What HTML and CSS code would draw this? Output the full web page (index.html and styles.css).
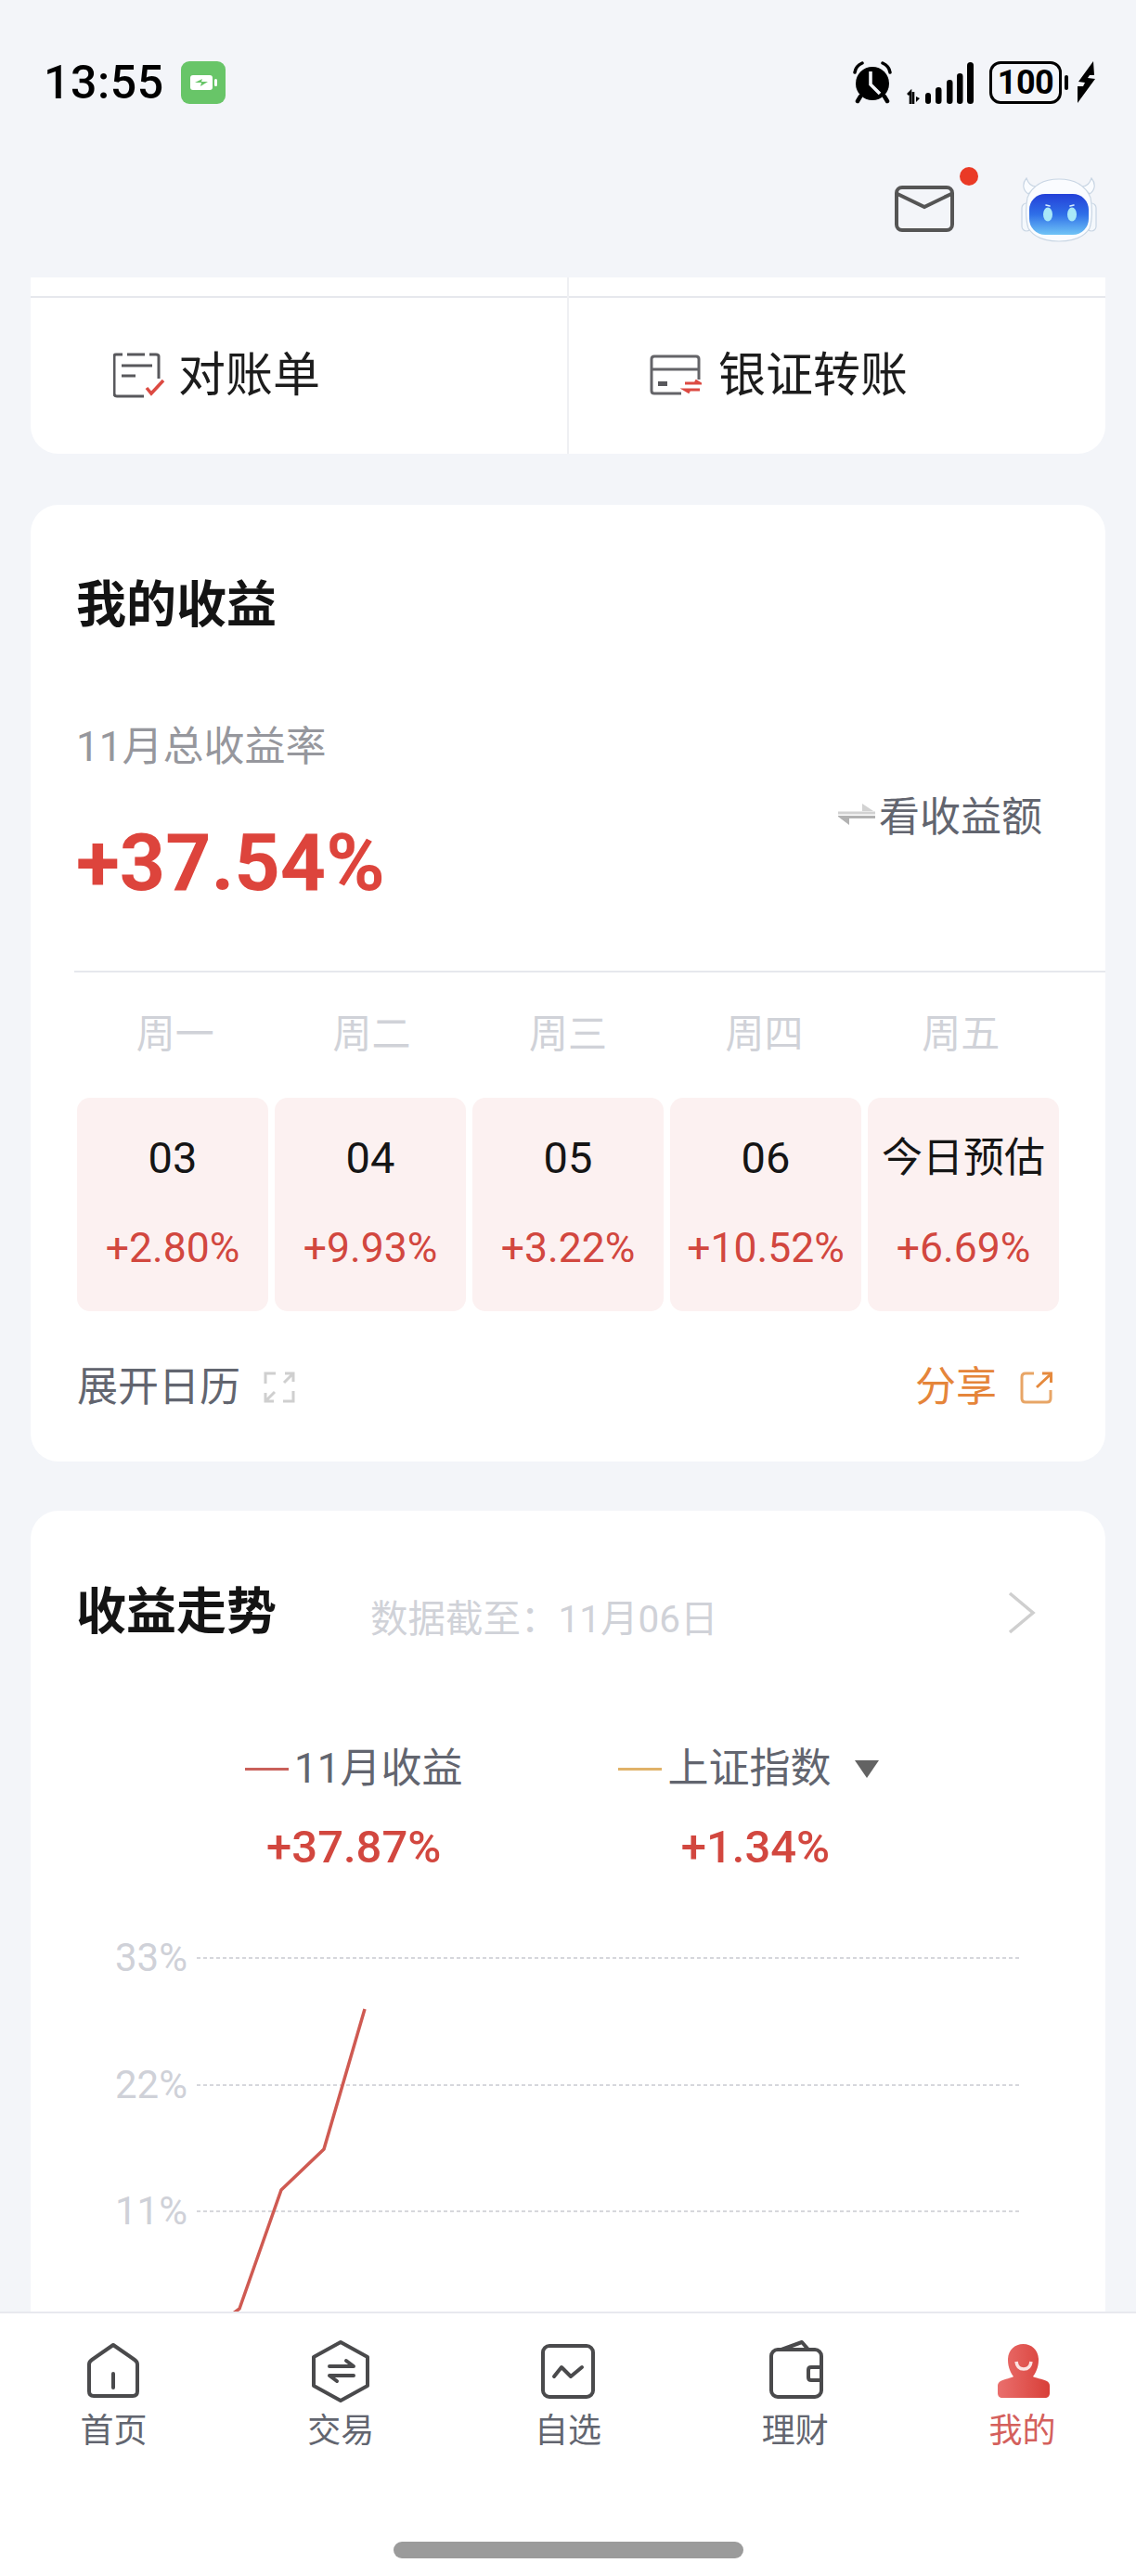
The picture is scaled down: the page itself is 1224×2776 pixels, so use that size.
FILE: index.html
```html
<!DOCTYPE html>
<html lang="zh-CN">
<head>
<meta charset="utf-8">
<title>我的收益</title>
<link rel="stylesheet" href="styles.css">
</head>
<body>
<div class="screen">
  <header class="status">
    <div class="status-left">
      <span class="clock">13:55</span>
      <svg class="charge-badge" width="48" height="46" viewBox="0 0 48 46"><rect width="48" height="46" rx="9" fill="#68c568"/><rect x="10" y="15" width="24" height="16" rx="3" fill="#fff"/><rect x="36" y="19" width="3" height="8" rx="1.5" fill="#fff"/><path d="M15 23l8-4-1 3 7 0-8 5 1-4z" fill="#68c568"/></svg>
    </div>
    <div class="status-right">
      <svg class="st-alarm" width="44" height="46" viewBox="0 0 44 46"><path d="M3 12Q4 5 11 2M41 12Q40 5 33 2" fill="none" stroke="#000" stroke-width="3.5" stroke-linecap="round"/><path d="M9 38l-3 5M35 38l3 5" stroke="#000" stroke-width="4.5" stroke-linecap="round"/><circle cx="22" cy="24" r="18" fill="#000"/><path d="M20 11v14l10 10" fill="none" stroke="#f3f5f9" stroke-width="3.6"/></svg>
      <svg class="st-signal" width="74" height="46" viewBox="0 0 74 46"><path d="M2 36l3-3v13M8 33v13" fill="none" stroke="#000" stroke-width="2.6"/><path d="M11 38l4 2-4 4z" fill="#000"/><rect x="21" y="34" width="6" height="12" rx="3"/><rect x="32" y="28" width="6.500" height="18" rx="3.200"/><rect x="44" y="20" width="6.500" height="26" rx="3.200"/><rect x="55" y="13" width="6.500" height="33" rx="3.200"/><rect x="66" y="1" width="7" height="45" rx="3.500"/></svg>
      <div class="st-battery"><span class="st-battery-level">100</span></div>
      <span class="st-cap"></span>
      <svg class="st-bolt" width="22" height="46" viewBox="0 0 22 46"><path d="M19 0L3 22l7 1-2 4-7 0 1 0L2 45 21 19l-8-1 2-3 5 0z" fill="#000"/></svg>
    </div>
  </header>

  <div class="toolbar">
    <div class="mail">
      <svg width="64" height="50" viewBox="0 0 64 50"><rect x="2" y="2" width="60" height="46" rx="6" fill="none" stroke="#555" stroke-width="4"/><path d="M3 9l29 14L61 9" fill="none" stroke="#555" stroke-width="4"/></svg>
      <span class="mail-dot"></span>
    </div>
    <svg class="robot" width="84" height="70" viewBox="0 0 84 70">
      <defs>
        <linearGradient id="face" x1="0" y1="0" x2="0" y2="1"><stop offset="0" stop-color="#2340d8"/><stop offset="0.5" stop-color="#2f6fe8"/><stop offset="1" stop-color="#70c4f6"/></linearGradient>
      </defs>
      <path d="M7 1C2 7 3 14 9 18L17 10C12 10 9 7 7 1ZM77 1C82 7 81 14 75 18L67 10C72 10 75 7 77 1Z" fill="#fafcff" stroke="#c9d6e4" stroke-width="1.200"/>
      <rect x="2" y="28" width="10" height="30" rx="5" fill="#f4f8fc" stroke="#c9d6e4" stroke-width="1.200"/>
      <rect x="72" y="28" width="10" height="30" rx="5" fill="#f4f8fc" stroke="#c9d6e4" stroke-width="1.200"/>
      <path d="M42 2C58 2 70 8 76 22C78 32 78 46 75 55C68 66 56 69 42 69C28 69 16 66 9 55C6 46 6 32 8 22C14 8 26 2 42 2Z" fill="#fafcff" stroke="#c9d6e4" stroke-width="1.200"/>
      <rect x="10" y="18" width="64" height="44" rx="17" fill="url(#face)"/>
      <ellipse cx="30" cy="40" rx="5" ry="7.500" fill="#a8e8f8"/><ellipse cx="56" cy="40" rx="5" ry="7.500" fill="#a8e8f8"/>
      <path d="M28 30l4 1M58 30l-4 1" stroke="#d8eeff" stroke-width="1.600" stroke-linecap="round"/>
    </svg>
  </div>

  <section class="card shortcuts">
    <div class="shortcut">
      <div class="shortcut-row">
        <svg width="56" height="50" viewBox="0 0 56 50"><path d="M10 2H3Q1 2 1 4V44Q1 47 4 47H33M39 2H46Q49 2 49 4V28M15 2H34" fill="none" stroke="#58585c" stroke-width="3"/><path d="M9 14H42M9 25H24" stroke="#58585c" stroke-width="3"/><path d="M36 38l5 6 13-14" fill="none" stroke="#dc4a42" stroke-width="3.500"/></svg>
        <span class="shortcut-text">对账单</span>
      </div>
    </div>
    <div class="shortcut shortcut-alt">
      <div class="shortcut-row">
        <svg width="56" height="46" viewBox="0 0 56 46"><path d="M34 42H5Q2 42 2 39V5Q2 2 5 2H50Q53 2 53 5V27M2 16H53" fill="none" stroke="#646468" stroke-width="3"/><rect x="9" y="29" width="10" height="5" fill="#58585c"/><path d="M38 31H54L49 28M54 38H38L43 41" fill="none" stroke="#dc4a42" stroke-width="3"/></svg>
        <span class="shortcut-text">银证转账</span>
      </div>
    </div>
  </section>

  <section class="card earnings">
    <h2 class="card-title">我的收益</h2>
    <div class="summary">
      <div class="summary-main">
        <div class="summary-label">11月总收益率</div>
        <div class="summary-value">+37.54%</div>
      </div>
      <div class="switch">
        <svg width="40" height="28" viewBox="0 0 40 28"><path d="M0 14.500H40V11.500H0zM26 3L38 11H26z" fill="#d2d2d2"/><path d="M0 16H40V19H12V26L0 17z" fill="#b2b2b2"/></svg>
        <span>看收益额</span>
      </div>
    </div>
    <div class="rule"></div>
    <div class="weekdays">
      <span>周一</span><span>周二</span><span>周三</span><span>周四</span><span>周五</span>
    </div>
    <div class="days">
      <div class="day"><div class="day-date day-num">03</div><div class="day-pct">+2.80%</div></div>
      <div class="day"><div class="day-date day-num">04</div><div class="day-pct">+9.93%</div></div>
      <div class="day"><div class="day-date day-num">05</div><div class="day-pct">+3.22%</div></div>
      <div class="day"><div class="day-date day-num">06</div><div class="day-pct">+10.52%</div></div>
      <div class="day"><div class="day-date">今日预估</div><div class="day-pct">+6.69%</div></div>
    </div>
    <div class="card-foot">
      <div class="foot-item">
        <span>展开日历</span>
        <svg width="34" height="34" viewBox="0 0 34 34" fill="none" stroke="#cfcfcf" stroke-width="3"><path d="M13 2H2V13M21 32H32V21"/><path d="M32 11V2H23M32 2L22 12M2 23V32H11M2 32L12 22"/></svg>
      </div>
      <div class="foot-item foot-share">
        <span>分享</span>
        <svg width="35" height="35" viewBox="0 0 35 35" fill="none" stroke="#e8a566" stroke-width="3"><path d="M15 2H6Q2 2 2 6V29Q2 33 6 33H29Q33 33 33 29V20"/><path d="M18 17L33 3" stroke="#e58a3e"/><path d="M24 2H33.500V12" stroke="#e58a3e"/></svg>
      </div>
    </div>
  </section>

  <section class="card trend">
    <div class="trend-head">
      <h2 class="card-title">收益走势</h2>
      <span class="trend-date">数据截至：11月06日</span>
      <svg class="trend-more" width="30" height="46" viewBox="0 0 30 46"><path d="M2 2L27 23L2 44" fill="none" stroke="#cfcfcf" stroke-width="3.500"/></svg>
    </div>
    <div class="legend">
      <div class="legend-item">
        <div class="legend-name"><i class="swatch swatch-red"></i><span>11月收益</span></div>
        <div class="legend-value">+37.87%</div>
      </div>
      <div class="legend-item">
        <div class="legend-name"><i class="swatch swatch-gold"></i><span>上证指数</span><i class="caret"></i></div>
        <div class="legend-value legend-value-alt">+1.34%</div>
      </div>
    </div>
    <div class="chart">
      <div class="chart-row"><span class="chart-label">33%</span><i class="chart-grid"></i></div>
      <div class="chart-row"><span class="chart-label">22%</span><i class="chart-grid"></i></div>
      <div class="chart-row"><span class="chart-label">11%</span><i class="chart-grid"></i></div>
      <svg class="chart-line" width="1158" height="460" viewBox="0 0 1158 460"><polyline points="360,123 316,274 270,318 225,446 217,452" fill="none" stroke="#cf5a52" stroke-width="3.500"/></svg>
    </div>
  </section>

  <nav class="tabbar">
    <div class="tabs">
      <div class="tab">
        <svg width="60" height="60" viewBox="0 0 60 60" fill="none" stroke="#4a4a4c" stroke-width="4" stroke-linejoin="round"><path d="M30 3L53 19Q56 21 56 24V53Q56 58 51 58H9Q4 58 4 53V24Q4 21 7 19Z"/><path d="M30 34V49" stroke-linecap="round"/></svg>
        <span>首页</span>
      </div>
      <div class="tab">
        <svg width="60" height="60" viewBox="0 0 60 60" fill="none" stroke="#4a4a4c" stroke-width="4" stroke-linejoin="round" stroke-linecap="round"><path d="M30 0L59 16V47L30 63L1 47V16Z"/><path d="M18 26H44L36 20M44 36H18L26 42"/></svg>
        <span>交易</span>
      </div>
      <div class="tab">
        <svg width="60" height="60" viewBox="0 0 60 60" fill="none" stroke="#4a4a4c" stroke-width="4" stroke-linejoin="round" stroke-linecap="round"><rect x="3" y="4" width="54" height="55" rx="7"/><path d="M15 37L23 27L33 37L45 27"/></svg>
        <span>自选</span>
      </div>
      <div class="tab">
        <svg width="60" height="60" viewBox="0 0 60 60" fill="none" stroke="#4a4a4c" stroke-width="4" stroke-linejoin="round"><rect x="4" y="8" width="54" height="51" rx="7"/><path d="M15 8L37 0L44 8M58 27H47Q44 27 44 30V38Q44 41 47 41H58"/></svg>
        <span>理财</span>
      </div>
      <div class="tab tab-on">
        <svg width="60" height="60" viewBox="0 0 60 60"><defs><linearGradient id="me" x1="0" y1="0" x2="1" y2="0"><stop offset="0" stop-color="#ea6f6d"/><stop offset="1" stop-color="#d83f38"/></linearGradient></defs><path d="M30.500 2C40 2 47 9 47 19C47 27 44 33 41 37C42 38 52 40 56 42C58 43 59 45 59 47V55C59 58 57 60 54 60H8C5 60 3 58 3 55V47C3 45 4 43 6 42C10 40 19 38 20 37C17 33 14 27 14 19C14 9 21 2 30.500 2Z" fill="url(#me)"/><path d="M23 21Q24 29 31 29Q38 29 39 21" fill="none" stroke="#fbe3e2" stroke-width="3.500"/></svg>
        <span>我的</span>
      </div>
    </div>
    <div class="home-bar"></div>
  </nav>
</div>
</body>
</html>
```
FILE: styles.css
```css
* { box-sizing: border-box; }
html, body { margin: 0; padding: 0; }
body { background: #f3f5f9; font-family: Roboto, "Noto Sans CJK SC", sans-serif; color: #1a1a1a; }
.screen { position: relative; width: 1224px; height: 2776px; overflow: hidden; background: #f3f5f9; }

.status { height: 178px; padding: 0 43px 0 47px; display: flex; align-items: center; justify-content: space-between; }
.status-left { display: flex; align-items: center; gap: 18px; }
.clock { font-size: 50px; line-height: 60px; font-weight: 500; color: #000; letter-spacing: 0.6px; }
.charge-badge { display: block; }
.status-right { display: flex; align-items: center; }
.status-right svg { display: block; }
.st-signal { margin-left: 14px; }
.st-battery { margin-left: 16px; width: 78px; height: 46px; border: 3.5px solid #000; border-radius: 12px; display: flex; align-items: center; justify-content: center; }
.st-battery-level { font-size: 36px; font-weight: 700; line-height: 40px; color: #000; letter-spacing: -0.5px; }
.st-cap { margin-left: 3px; width: 4px; height: 16px; border-radius: 2px; background: #000; }
.st-bolt { margin-left: 8px; }

.toolbar { height: 121px; padding: 13px 41px 0 0; display: flex; align-items: flex-start; justify-content: flex-end; gap: 71px; }
.mail { position: relative; margin-top: 9px; width: 64px; height: 50px; }
.mail svg { display: block; }
.mail-dot { position: absolute; left: 70px; top: -20px; width: 20px; height: 20px; border-radius: 50%; background: #ea3a26; }
.robot { display: block; }

.card { margin: 0 33px; background: #fff; }
.shortcuts { height: 190px; border-radius: 0 0 30px 30px; display: grid; grid-template-columns: 580px 1fr; }
.shortcut { padding-top: 20px; border-right: 2px solid #eff0f3; }
.shortcut-alt { border-right: 0; }
.shortcut-row { height: 170px; border-top: 2px solid #e6e8ed; display: flex; align-items: center; padding-left: 89px; gap: 14px; }
.shortcut-alt .shortcut-row { padding-left: 87px; gap: 18px; }
.shortcut-text { font-size: 51px; line-height: 60px; color: #1c1c1c; }

.earnings { margin-top: 55px; height: 1031px; border-radius: 30px; padding-top: 79px; }
.card-title { margin: 0; padding-left: 49px; font-size: 54px; line-height: 60px; font-weight: 700; color: #141414; }
.summary { margin-top: 92px; padding: 0 68px 0 49px; display: flex; justify-content: space-between; align-items: flex-start; }
.summary-label { font-size: 44px; line-height: 60px; color: #96979d; }
.summary-value { margin-top: 45px; font-size: 86px; line-height: 100px; font-weight: 700; color: #dd443c; }
.switch { margin-top: 72px; height: 60px; display: flex; align-items: center; gap: 4px; font-size: 44px; color: #62656f; }
.rule { margin: 66px 0 0 47px; height: 2px; background: #e6e8ed; }
.weekdays { margin-top: 37px; padding: 0 50px; display: grid; grid-template-columns: repeat(5, 1fr); text-align: center; font-size: 42px; line-height: 60px; color: #d0d2d8; }
.days { margin-top: 38px; padding: 0 50px; display: grid; grid-template-columns: repeat(5, 1fr); gap: 7px; }
.day { height: 230px; padding-top: 35px; border-radius: 14px; background: #fcf1f1; text-align: center; }
.day-date { font-size: 44px; line-height: 60px; color: #151515; }
.day-num { font-size: 47px; }
.day-pct { margin-top: 37px; font-size: 44.5px; line-height: 60px; color: #d2473f; }
.card-foot { margin-top: 52px; padding: 0 57px 0 50px; display: flex; justify-content: space-between; align-items: center; }
.foot-item { display: flex; align-items: center; gap: 25px; font-size: 44px; line-height: 60px; color: #62656f; }
.foot-item svg { display: block; }
.foot-share { color: #e5853a; }

.trend { margin-top: 53px; height: 1200px; border-radius: 30px 30px 0 0; padding-top: 80px; }
.trend-head { display: flex; align-items: flex-start; }
.trend-date { margin: 7px 0 0 101px; font-size: 40.5px; line-height: 60px; color: #d0d2d8; }
.trend-more { margin: 7px 75px 0 auto; display: block; }
.legend { margin-top: 101px; padding-left: 231px; display: flex; gap: 168px; }
.legend-item { text-align: center; }
.legend-name { display: flex; align-items: center; font-size: 44px; line-height: 60px; color: #62656f; }
.swatch { display: block; width: 47px; height: 3px; margin-right: 6px; }
.swatch-red { background: #c9605a; }
.swatch-gold { background: #e0b269; }
.caret { display: block; margin-left: 26px; width: 0; height: 0; border-left: 13px solid transparent; border-right: 13px solid transparent; border-top: 19px solid #636363; }
.legend-value { margin-top: 25px; font-size: 49px; line-height: 60px; font-weight: 500; color: #d2473f; }
.legend-value-alt { padding-left: 14px; }
.chart { position: relative; margin-top: 21px; padding-left: 91px; }
.chart-row { height: 136.5px; display: flex; align-items: center; }
.chart-label { width: 78px; font-size: 42px; line-height: 50px; color: #cfd1d8; }
.chart-grid { display: block; margin: 0 92px 0 10px; flex: 1; height: 2px; background: repeating-linear-gradient(90deg, #d6d7dc 0 4px, transparent 4px 7px); }
.chart-line { position: absolute; left: 0; top: 0; display: block; }

.tabbar { position: absolute; left: 0; right: 0; bottom: 0; height: 285px; background: #fff; border-top: 2px solid #e8e9ef; padding-top: 31px; }
.tabs { display: grid; grid-template-columns: repeat(5, 1fr); }
.tab { display: flex; flex-direction: column; align-items: center; font-size: 36px; line-height: 44px; color: #62656f; }
.tab svg { display: block; overflow: visible; margin-bottom: 14px; }
.tab-on { color: #d4605c; }
.home-bar { width: 377px; height: 18px; margin: 97px auto 0; border-radius: 9px; background: #9b9b9b; }
```
